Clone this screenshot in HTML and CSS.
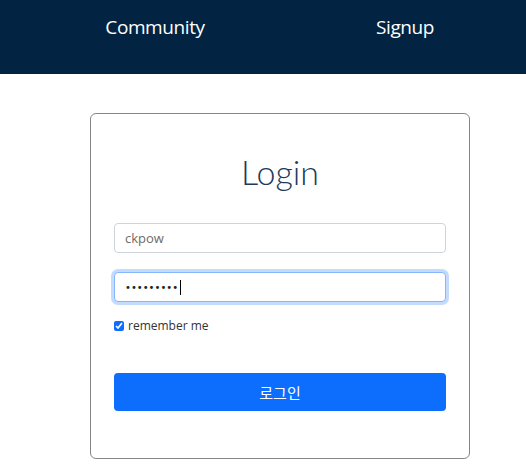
FILE: index.html
```html
<!DOCTYPE html>
<html lang="ko">
<head>
<meta charset="utf-8">
<link rel="stylesheet" href="styles.css">
</head>
<body>
<nav class="navbar">
  <a class="nav-link" href="#">Community</a>
  <a class="nav-link" href="#">Signup</a>
</nav>
<main class="main">
  <form class="card">
    <h1 class="title">Login</h1>
    <div class="field">
      <input class="control" type="text" value="ckpow">
    </div>
    <div class="field">
      <div class="control control-focus"><span class="dots">•••••••••</span><span class="caret"></span></div>
    </div>
    <label class="check">
      <input class="check-input" type="checkbox" checked>
      <span>remember me</span>
    </label>
    <button class="btn" type="button">로그인</button>
  </form>
</main>
</body>
</html>
```
FILE: styles.css
```css
* { box-sizing: border-box; }
html, body { margin: 0; padding: 0; background: #fff; }
body { font-family: "Open Sans", "Noto Sans CJK KR", sans-serif; color: #212529; }

.navbar {
  height: 74px;
  background: #022442;
  display: grid;
  grid-template-columns: 250px 250px;
  padding-left: 30px;
  padding-top: 14px;
  align-items: start;
}
.nav-link {
  color: #fff;
  text-decoration: none;
  font-size: 19px;
  font-weight: 500;
  text-align: center;
  letter-spacing: -0.4px;
}

.main {
  padding: 39px 0 0 90px;
}
.card {
  width: 380px;
  height: 346px;
  border: 1px solid #868686;
  border-radius: 6px;
  padding: 30px 23px 0 23px;
  display: flex;
  flex-direction: column;
}
.title {
  margin: 0 0 23px;
  font-family: Lato, sans-serif;
  font-weight: 300;
  font-size: 34px;
  line-height: 56px;
  text-align: center;
  color: #1d3a5c;
}
.field { margin-bottom: 19px; }
.control {
  display: flex;
  align-items: center;
  width: 100%;
  height: 30px;
  border: 1px solid #ced4da;
  border-radius: 4px;
  padding: 0 10px;
  font-family: "Open Sans", sans-serif;
  font-size: 13px;
  color: #6c6c6c;
  background: #fff;
  outline: none;
}
.control-focus {
  border-color: #86b7fe;
  box-shadow: 0 0 0 3px rgba(13, 110, 253, 0.25);
  color: #212529;
}
.dots { font-size: 10px; letter-spacing: 0; font-family: "DejaVu Sans", sans-serif; }
.caret { width: 1px; height: 15px; background: #000; margin-left: 2px; }

.check {
  display: flex;
  align-items: center;
  gap: 4px;
  margin-top: -4px;
  font-size: 12px;
  color: #333;
}
.check-input {
  width: 10px;
  height: 10px;
  margin: 0;
  accent-color: #0d6efd;
}
.btn {
  margin-top: 39px;
  height: 38px;
  width: 100%;
  border: none;
  border-radius: 4px;
  background: #0d6efd;
  color: #fff;
  font-family: "Noto Sans CJK KR", sans-serif;
  font-size: 15px;
}
```
